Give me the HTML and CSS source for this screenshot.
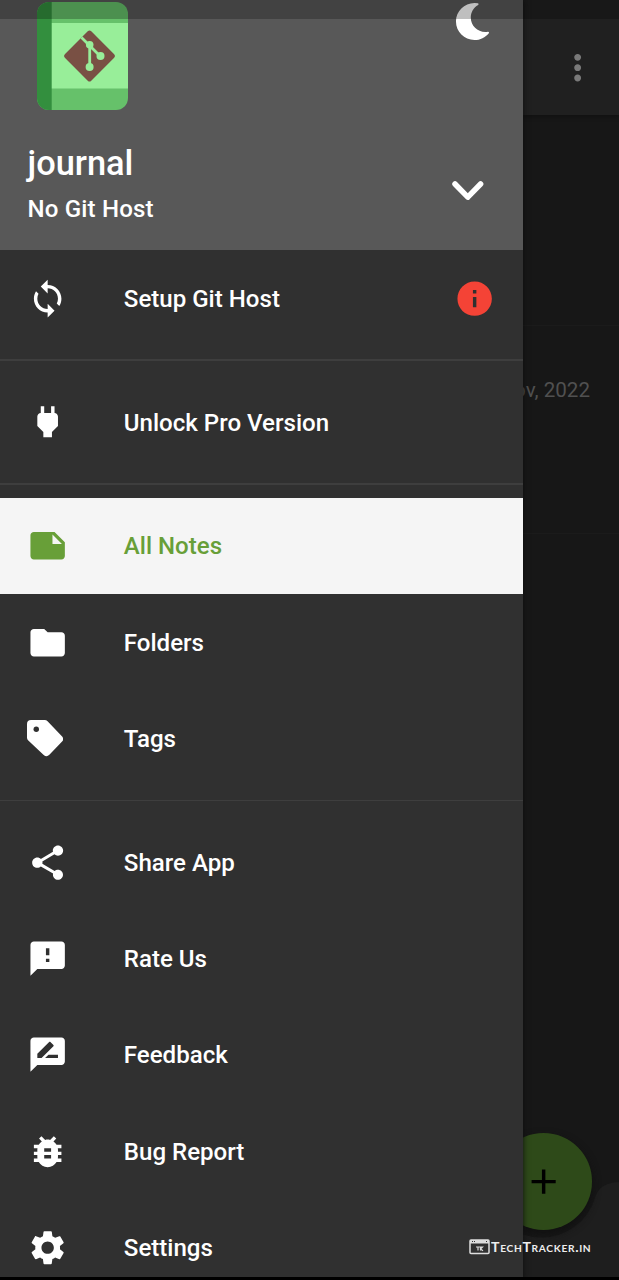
FILE: index.html
```html
<!DOCTYPE html>
<html lang="en">
<head>
<meta charset="utf-8">
<meta name="viewport" content="width=device-width">
<title>journal</title>
<link rel="stylesheet" href="styles.css">
</head>
<body>
<div class="screen">
  <main class="notes">
    <header class="app-bar">
      <svg class="more" viewBox="0 0 24 24"><path d="M12 8c1.1 0 2-.9 2-2s-.9-2-2-2-2 .9-2 2 .9 2 2 2zm0 2c-1.1 0-2 .9-2 2s.9 2 2 2 2-.9 2-2-.9-2-2-2zm0 6c-1.1 0-2 .9-2 2s.9 2 2 2 2-.9 2-2-.9-2-2-2z"/></svg>
    </header>
    <div class="note-gap"></div>
    <article class="note"><time>14 Nov, 2022</time></article>
    <svg class="bottom-bar" viewBox="0 0 619 98"><path d="M0 0H466C481 1 485 7 488 16A56 56 0 0 0 595 16C598 7 603 1 619 0V98H0Z"/></svg>
  </main>
  <button class="fab" aria-label="New note"><svg viewBox="0 0 24 24"><path d="M19 13h-6v6h-2v-6H5v-2h6V5h2v6h6v2z"/></svg></button>

  <nav class="drawer">
    <header class="account">
      <div class="account-top">
        <svg class="logo" viewBox="0 0 91 108">
          <defs><clipPath id="book"><rect width="91" height="108" rx="12"/></clipPath></defs>
          <g clip-path="url(#book)">
            <path fill="#66c16a" d="M0 0h91v108H0z"/>
            <path fill="#98ee99" d="M14 21h77v65.500H14z"/>
            <path fill="#338f3e" d="M0 0h14.700v108H0z"/>
          </g>
          <rect x="33.800" y="35.300" width="37.400" height="37.400" rx="2.500" fill="#795044" transform="rotate(45 52.500 54)"/>
          <g fill="none" stroke="#98ee99" stroke-width="2.800"><path d="M44.500 35.500L63 54M52.700 43v22"/></g>
          <g fill="#98ee99"><circle cx="52.700" cy="42.700" r="3.800"/><circle cx="63.500" cy="54" r="4"/><circle cx="52.600" cy="65" r="4"/></g>
        </svg>
        <svg class="moon" viewBox="0 0 512 512"><path d="M283.211 512c78.962 0 151.079-35.925 198.857-94.792 7.068-8.708-.639-21.430-11.562-19.350-124.203 23.654-238.262-71.576-238.262-196.954 0-72.222 38.662-138.635 101.498-174.394 9.686-5.512 7.250-20.197-3.756-22.230A258.156 258.156 0 0 0 283.211 0c-141.309 0-256 114.511-256 256 0 141.309 114.511 256 256 256z"/></svg>
      </div>
      <div class="account-info">
        <div>
          <h1>journal</h1>
          <p>No Git Host</p>
        </div>
        <svg class="chevron" viewBox="0 0 32 20"><path d="M3 3l12.800 13.200L28.600 3"/></svg>
      </div>
    </header>

    <a class="item"><svg class="icon" viewBox="0 0 24 24"><path d="M12 4V1L8 5l4 4V6c3.310 0 6 2.690 6 6 0 1.010-.250 1.970-.700 2.800l1.460 1.460C19.540 15.030 20 13.570 20 12c0-4.420-3.580-8-8-8zm0 14c-3.310 0-6-2.690-6-6 0-1.010.250-1.970.700-2.800L5.240 7.740C4.460 8.970 4 10.430 4 12c0 4.420 3.580 8 8 8v3l4-4-4-4v3z"/></svg><span>Setup Git Host</span>
      <svg class="icon alert" viewBox="0 0 24 24"><path d="M12 2C6.480 2 2 6.480 2 12s4.480 10 10 10 10-4.480 10-10S17.520 2 12 2zm1 15h-2v-6h2v6zm0-8h-2V7h2v2z"/></svg></a>
    <hr>
    <a class="item"><svg class="icon" viewBox="0 0 24 24"><path d="M16.010 7L16 3h-2v4h-4V3H8v4h-.010C7 6.990 6 7.990 6 8.990v5.490L9.500 18v3h5v-3l3.500-3.510v-5.500c0-1-1-2-1.990-1.990z"/></svg><span>Unlock Pro Version</span></a>
    <hr>
    <a class="item selected"><svg class="icon" viewBox="0 0 24 24"><path fill-rule="evenodd" d="M16 4H4c-1.100 0-2 .900-2 2v12.010c0 1.100.900 1.990 2 1.990h16c1.100 0 2-.900 2-2v-8l-6-6zM14.800 5.500l5.500 5.500h-5.500z"/></svg><span>All Notes</span></a>
    <a class="item"><svg class="icon" viewBox="0 0 24 24"><path d="M10 4H4c-1.100 0-1.990.900-1.990 2L2 18c0 1.100.900 2 2 2h16c1.100 0 2-.900 2-2V8c0-1.100-.900-2-2-2h-8l-2-2z"/></svg><span>Folders</span></a>
    <a class="item"><svg class="icon tag" viewBox="0 0 36 36"><path fill="currentColor" stroke="currentColor" stroke-width="8" stroke-linejoin="round" d="M4 4H17.500L31.700 18.900 19.300 31.700 4 17.500z"/><circle cx="9.200" cy="9.200" r="2.700" fill="#303030"/></svg><span>Tags</span></a>
    <hr>
    <a class="item"><svg class="icon" viewBox="0 0 24 24"><path d="M18 16.080c-.760 0-1.440.300-1.960.770L8.910 12.700c.050-.230.090-.460.090-.700s-.040-.470-.090-.700l7.050-4.110c.540.500 1.250.810 2.040.810 1.660 0 3-1.340 3-3s-1.340-3-3-3-3 1.340-3 3c0 .240.040.470.090.700L8.040 9.810C7.500 9.310 6.790 9 6 9c-1.660 0-3 1.340-3 3s1.340 3 3 3c.790 0 1.500-.310 2.040-.810l7.120 4.160c-.050.210-.080.430-.080.650 0 1.610 1.310 2.920 2.920 2.920s2.920-1.310 2.920-2.920-1.310-2.920-2.920-2.920z"/></svg><span>Share App</span></a>
    <a class="item"><svg class="icon" viewBox="0 0 24 24"><path d="M20 2H4c-1.100 0-1.990.900-1.990 2L2 22l4-4h14c1.100 0 2-.900 2-2V4c0-1.100-.900-2-2-2zm-7 12h-2v-2h2v2zm0-4h-2V6h2v4z"/></svg><span>Rate Us</span></a>
    <a class="item"><svg class="icon" viewBox="0 0 24 24"><path d="M20 2H4c-1.100 0-2 .900-2 2v18l4-4h14c1.100 0 2-.900 2-2V4c0-1.100-.900-2-2-2zM6 14v-2.470l6.880-6.880c.200-.200.510-.200.710 0l1.770 1.770c.200.200.200.510 0 .710L8.470 14H6zm12 0h-7.500l2-2H18v2z"/></svg><span>Feedback</span></a>
    <a class="item"><svg class="icon" viewBox="0 0 24 24"><path d="M20 8h-2.810c-.450-.780-1.070-1.450-1.820-1.960L17 4.410 15.590 3l-2.170 2.170C12.960 5.060 12.490 5 12 5s-.960.060-1.410.170L8.410 3 7 4.410l1.620 1.630C7.880 6.550 7.260 7.220 6.810 8H4v2h2.090c-.050.330-.090.660-.090 1v1H4v2h2v1c0 .340.040.670.090 1H4v2h2.810c1.040 1.790 2.970 3 5.190 3s4.150-1.210 5.190-3H20v-2h-2.090c.050-.330.090-.660.090-1v-1h2v-2h-2v-1c0-.340-.040-.670-.090-1H20V8zm-6 8h-4v-2h4v2zm0-4h-4v-2h4v2z"/></svg><span>Bug Report</span></a>
    <a class="item"><svg class="icon" viewBox="0 0 24 24"><path d="M19.140 12.940c.040-.300.060-.610.060-.940 0-.320-.020-.640-.070-.940l2.030-1.580c.180-.140.230-.410.120-.610l-1.920-3.320c-.120-.220-.370-.290-.590-.220l-2.390.960c-.500-.380-1.030-.700-1.620-.940l-.360-2.540c-.040-.240-.240-.410-.480-.410h-3.840c-.240 0-.430.170-.470.410l-.360 2.540c-.590.240-1.130.570-1.620.940l-2.390-.960c-.220-.080-.470 0-.590.220L2.740 8.870c-.120.210-.080.470.120.610l2.030 1.580c-.050.300-.090.630-.090.940s.020.640.070.940l-2.030 1.580c-.180.140-.230.410-.120.610l1.920 3.320c.120.220.370.290.590.220l2.390-.960c.500.380 1.030.700 1.620.940l.360 2.540c.050.240.240.410.480.410h3.840c.240 0 .440-.170.470-.410l.360-2.540c.590-.240 1.130-.560 1.620-.940l2.390.960c.220.080.470 0 .590-.220l1.920-3.320c.120-.220.070-.470-.120-.610l-2.010-1.580zM12 15.600c-1.980 0-3.600-1.620-3.600-3.600s1.620-3.600 3.600-3.600 3.600 1.620 3.600 3.600-1.620 3.600-3.600 3.600z"/></svg><span>Settings</span></a>
  </nav>

  <div class="status-bar"></div>
  <div class="watermark">
    <svg viewBox="0 0 21 16"><rect x="1" y="1" width="19" height="13.500" rx="1" fill="none" stroke="#ddd" stroke-width="1.500"/><path fill="#ddd" d="M1 1h19v3.500H1z"/><path fill="#333" d="M3 2h1v1H3zM5 2h1v1H5zM17 2h1v1h-1z"/><path d="M7 8h4M9 8v3.500M11.500 11.500V8h2l-2 2 2.500 1.800" fill="none" stroke="#ddd" stroke-width="1.200"/></svg>
    <span>TechTracker.in</span>
  </div>
  <div class="nav-edge"></div>
</div>
</body>
</html>
```
FILE: styles.css
```css
* { box-sizing: border-box; }
body { margin: 0; background: #171717; font-family: Roboto, "Liberation Sans", sans-serif; }
.screen { position: relative; width: 619px; height: 1280px; overflow: hidden; }
svg { display: block; }

.notes { display: flex; flex-direction: column; height: 1280px; background: #171717; }
.app-bar { display: flex; align-items: center; justify-content: flex-end; height: 115px; padding: 20px 21px 0 0; background: #202020; box-shadow: 0 1px 4px #101010; }
.more { width: 41.300px; height: 41.300px; fill: #797979; }
.note-gap { height: 211px; border-bottom: 1px solid #1b1b1b; }
.note { height: 208px; padding: 52px 29px 0 0; border-bottom: 1px solid #1b1b1b; text-align: right; color: #505050; font-size: 20.600px; line-height: 24px; }
.bottom-bar { width: 619px; height: 98px; margin-top: auto; fill: #1e1e1e; }

.fab { position: absolute; left: 495px; top: 1133px; width: 96.500px; height: 96.500px; display: grid; place-items: center; padding: 0; border: 0; border-radius: 50%; background: #2e4a19; box-shadow: 0 4px 8px #101010; }
.fab svg { width: 41.300px; height: 41.300px; fill: #000; }

.drawer { position: absolute; inset: 0 auto 0 0; width: 522.500px; display: flex; flex-direction: column; overflow: hidden; background: #303030; color: #fff; box-shadow: 0 0 6px #0e0e0e; }
.account { flex: none; height: 250.200px; background: #585858; }
.account-top { display: flex; justify-content: space-between; padding: 2px 31.500px 0 37px; }
.logo { width: 91px; height: 108px; }
.moon { width: 37px; height: 37px; margin-top: 1px; fill: #fff; }
.account-info { display: flex; justify-content: space-between; align-items: center; padding: 31px 39px 0 27.500px; }
.account-info h1 { margin: 0; font-size: 34.400px; line-height: 45px; font-weight: 500; }
.account-info p { margin: 0; padding-top: 9px; font-size: 24.080px; line-height: 28px; font-weight: 500; letter-spacing: 0.170px; }
.chevron { width: 32px; height: 20px; margin-top: 18px; fill: none; stroke: #fff; stroke-width: 5.500; stroke-linecap: round; stroke-linejoin: round; }

.item { flex: none; display: flex; align-items: center; height: 96.320px; padding: 0 27.500px 0 27px; font-size: 24.080px; line-height: 28px; font-weight: 500; }
.item span { padding: 1px 0 0 55.500px; }
.icon { flex: none; width: 41.300px; height: 41.300px; fill: currentColor; }
.tag { width: 36.300px; height: 36.300px; margin-right: 5px; }
.alert { margin-left: auto; color: #f44336; }
.selected { background: #f5f5f5; color: #689f38; }
hr { flex: none; width: 100%; height: 1.700px; margin: 12.900px 0; border: 0; background: #3e3e3e; }

.status-bar { position: absolute; inset: 0 0 auto; height: 19px; background: rgba(0, 0, 0, .25); }
.nav-edge { position: absolute; inset: auto 0 0; height: 3px; background: #000; }
.watermark { position: absolute; left: 469px; top: 1238px; display: flex; align-items: center; gap: 1px; color: #eee; font: 700 12.500px/16px Lato, sans-serif; white-space: nowrap; }
.watermark span { padding-top: 2px; font-variant-caps: small-caps; letter-spacing: .6px; transform: scaleX(1.130); transform-origin: left; }
.watermark svg { width: 21px; height: 16px; }
```
